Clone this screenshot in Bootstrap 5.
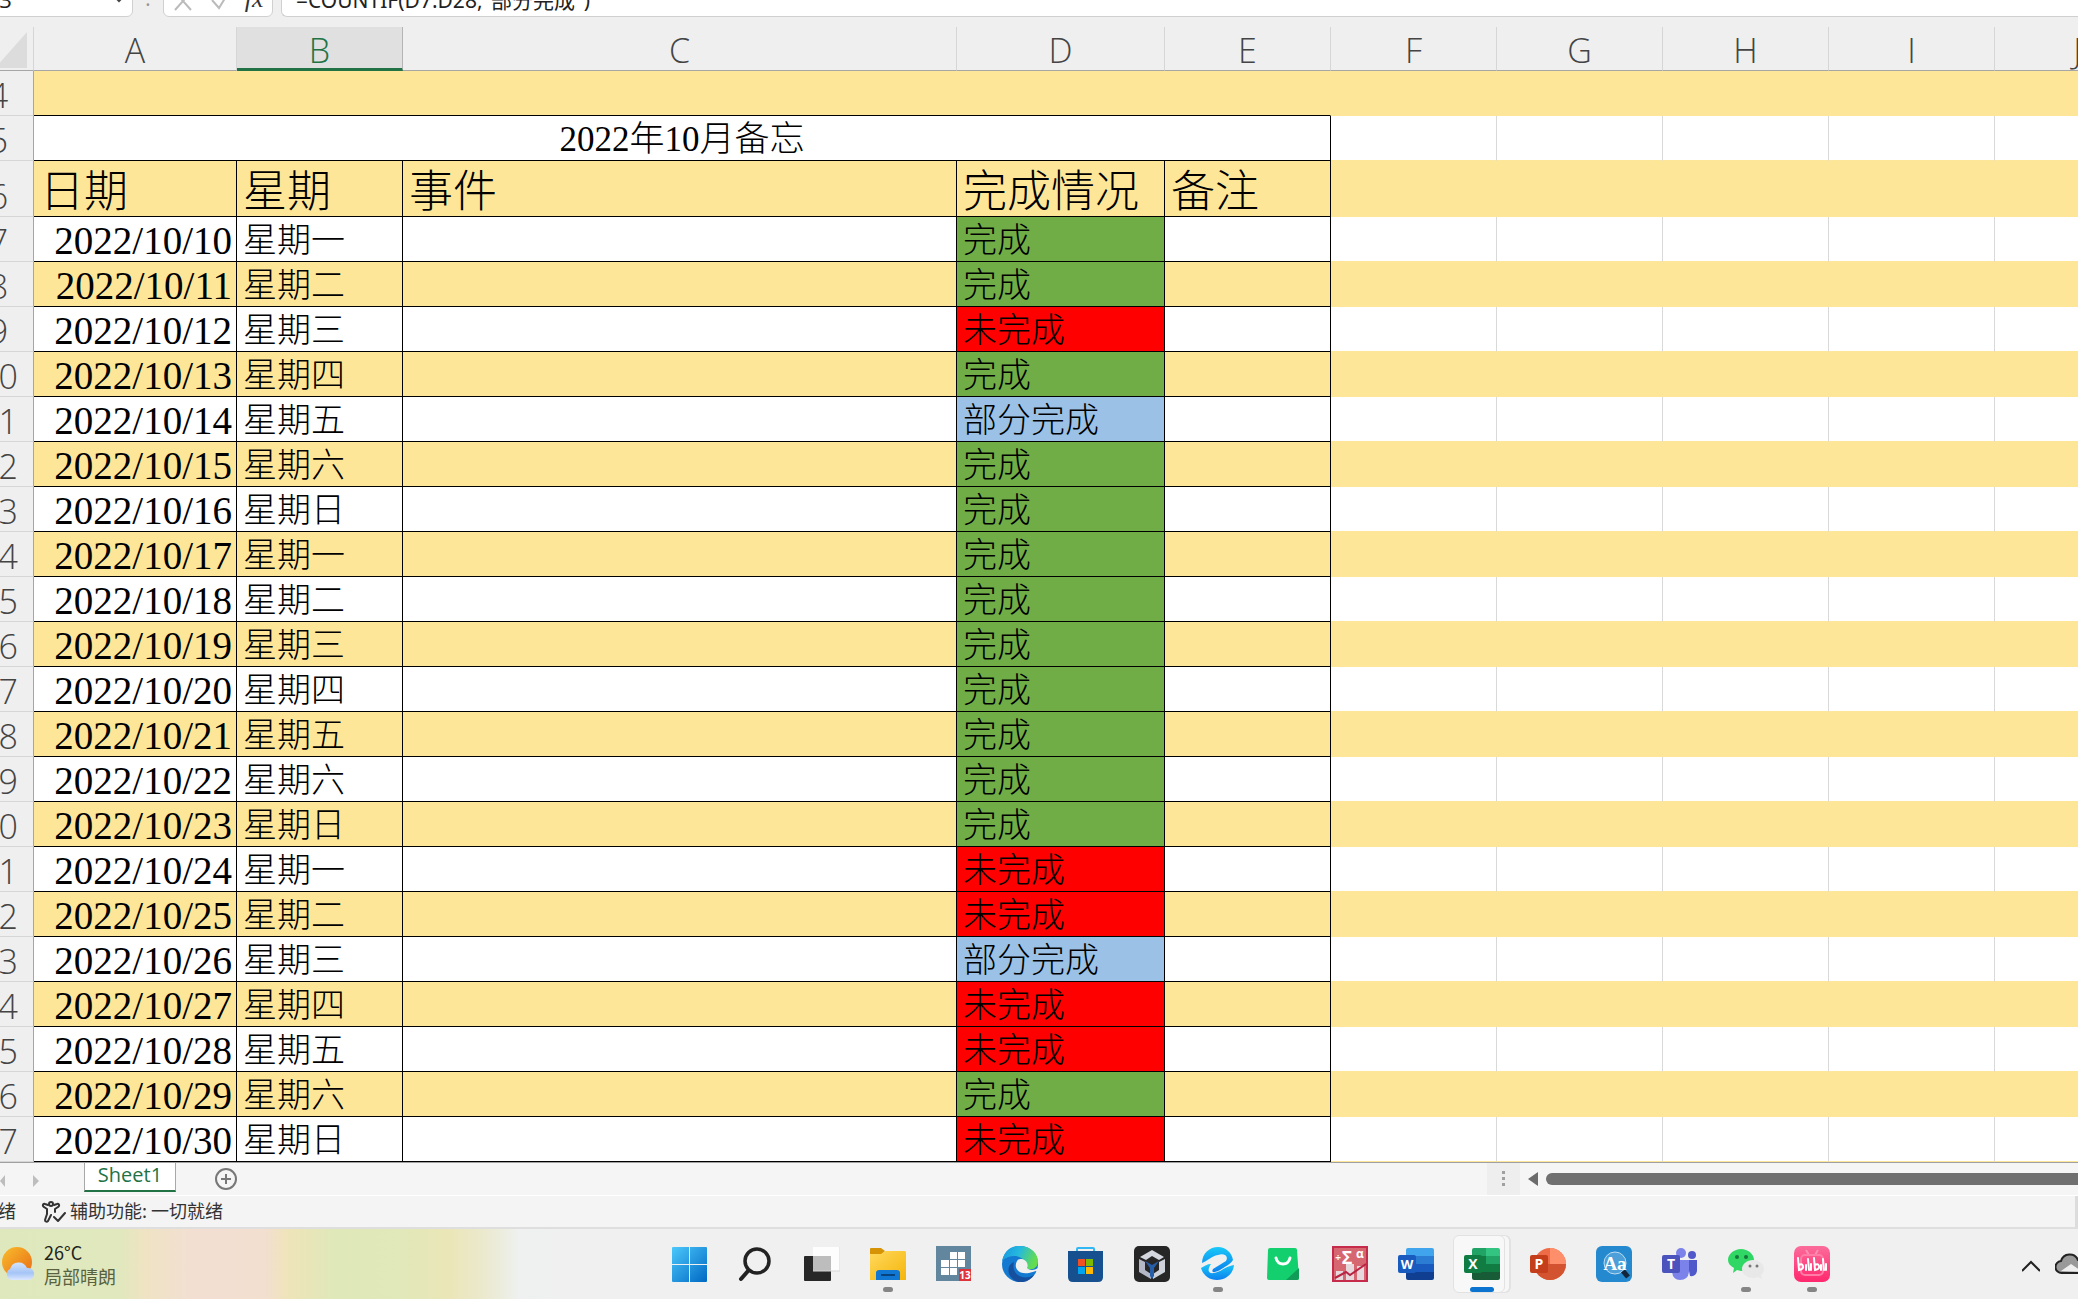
<!DOCTYPE html>
<html lang="zh-CN">
<head>
<meta charset="utf-8">
<meta name="viewport" content="width=device-width, initial-scale=1">
<title>2022年10月备忘 - Excel</title>
<link href="https://cdn.jsdelivr.net/npm/bootstrap@5.3.0/dist/css/bootstrap.min.css" rel="stylesheet">
<style>
  body { background: #efefef; color: #222; font-family: "Open Sans", "Noto Sans CJK SC", sans-serif; overflow: hidden; }
  /* formula bar */
  .formula-bar { margin-top: -19px; height: 36px; font-size: 22px; }
  .fx-box { background: #fff; border: 1px solid #d0d0d0; border-radius: 6px; height: 36px; }
  .name-box { width: 169px; margin-left: -36px; font-size: 22px; line-height: 34px; padding: 0 14px 0 20px; appearance: none;
    background: #fff; color: #222; }
  .name-wrap { position: relative; }
  .name-wrap svg { position: absolute; right: 8px; top: 12px; }
  .dots { width: 30px; text-align: center; color: #999; }
  .fx-tools { width: 110px; }
  .fx-tools button, .plain { background: none; border: 0; padding: 0; line-height: 1; }
  .fx-name { font: italic 26px "Liberation Serif", serif; color: #333; }
  .fx-input { font-family: "Noto Sans", "Noto Sans CJK SC", sans-serif; font-size: 21px; color: #222; padding: 0 14px; }
  /* sheet */
  .sheet { margin-top: 10px; margin-left: -36px; overflow: hidden; border-bottom: 1px solid #a0a0a0; }
  .grid { table-layout: fixed; width: 2197px; border-collapse: separate; border-spacing: 0; }
  .grid th, .grid td { height: 45px; padding: 4px 6px 0; border-right: 1px solid #d9d9d9; border-bottom: 1px solid #fee699;
    background: #fff; white-space: nowrap; line-height: 40px; vertical-align: middle; color: #000;
    font-family: "Liberation Serif", "Noto Sans CJK SC", serif; font-size: 34px; font-weight: 300; }
  .grid thead th { height: 44px; background: #efefef; border-bottom: 1px solid #a6a6a6; text-align: center;
    padding-top: 3px; font-family: "Open Sans", sans-serif; color: #444; border-right-color: #d6d6d6; }
  .grid thead th.picked { background: #e0e0e0; color: #217346; border-bottom: 3px solid #217346; border-right-color: #b4b4b4; padding-top: 5px; line-height: 36px; }
  .grid tbody th { background: #efefef; text-align: center; border-right-color: #a6a6a6; border-bottom-color: #d6d6d6;
    font-family: "Open Sans", sans-serif; color: #444; }
  .grid tr.band td { background: #fee699; border-color: #fee699; }
  .grid tr.titles td { height: 56px; font-size: 44px; padding-top: 8px; }
  .grid tr.titles th { height: 56px; vertical-align: bottom; }
  .grid td.edge, .grid tr.band td.edge { border-color: #000; }
  .grid tr.lead-row td { border-bottom-color: #000; }
  .grid td.caption-cell { font-size: 35px; }
  .grid td.day { font-size: 39px; text-align: right; padding-right: 4px; }
  .grid td.done, .grid tr.band td.done { background: #70ad47; }
  .grid td.undone, .grid tr.band td.undone { background: #f00; }
  .grid td.partly, .grid tr.band td.partly { background: #9bc2e6; }
  .all-corner { display: block; margin-left: auto; }
  /* tabs and status */
  .tab-strip { height: 33px; background: #f5f5f5; border-bottom: 1px solid #fff; }
  .tab-arrows { width: 84px; }
  .sheet-link { width: 92px; height: 29px; background: #fff; border: 1px solid #a8a8a8; border-top: 0; border-bottom: 2px solid #217346;
    color: #217346; font-size: 20px; line-height: 24px; text-align: center; text-decoration: none; }
  .add-sheet { margin-left: 38px; }
  .scroll-area { width: 591px; }
  .splitter { width: 33px; background: #eee; }
  .thumb { height: 12px; background: #707070; border-radius: 6px 0 0 6px; }
  .status { height: 33px; background: #f4f4f4; border-bottom: 2px solid #dedede; font: 18px/28px "Noto Sans CJK SC", sans-serif; color: #333; }
  .status-ready { margin-left: -20px; }
  .status-end { width: 3px; background: #dcdcdc; }
  /* taskbar */
  .taskbar { height: 70px; background: #f0f0f0; }
  .weather { width: 657px; font: 18px "Noto Sans CJK SC", sans-serif;
    background: linear-gradient(90deg, #dfe8bd 0, #e1e8bd 120px, #efe3c3 145px, #f2dfd2 190px, #f2dfd0 265px, #efe4b9 288px, #dfe8b9 335px, #e1e8b9 400px, #ebe6b8 450px, #ebe9cf 485px, #eef1f0 520px, #f0f0f0 560px); }
  .weather-text { line-height: 24px; color: #59623f; }
  .weather-text b { color: #20241a; font-weight: 400; }
  .app { width: 66px; height: 58px; position: relative; }
  .app svg { display: block; margin: 0 auto; }
  .app.running::after { content: ""; position: absolute; left: 28px; bottom: 1px; width: 10px; height: 5px; border-radius: 3px; background: #858585; }
  .app.current::before { content: ""; position: absolute; left: 4px; top: 0; width: 52px; height: 58px; border: 1px solid #e2e2e2; border-radius: 6px; background: #f8f8f8; box-shadow: 5px 0 0 -1px #f7f7f7, 6px 0 0 0 #e2e2e2; }
  .app.current svg { position: relative; }
  .app.current::after { left: 21px; width: 24px; background: #0a74d0; }
  .tray { gap: 15px; margin-right: -9px; }
  svg text { font-family: "Open Sans", sans-serif; font-weight: 700; fill: #fff; text-anchor: middle; }
</style>
<script src="https://cdn.jsdelivr.net/npm/bootstrap@5.3.0/dist/js/bootstrap.bundle.min.js"></script>
</head>
<body>
<header class="formula-bar d-flex">
  <div class="name-wrap">
    <input class="fx-box name-box" aria-label="名称框" value="B3">
    <svg width="12" height="10" viewBox="0 0 12 10"><path d="M1 3l5 5 5-5" fill="none" stroke="#444" stroke-width="2"/></svg>
  </div>
  <div class="dots">:</div>
  <div class="fx-box fx-tools d-flex align-items-center justify-content-around">
    <button aria-label="取消"><svg width="20" height="20" viewBox="0 0 20 20"><path d="M2 1l16 18M18 1L2 19" stroke="#bbb" stroke-width="2"/></svg></button>
    <button aria-label="输入"><svg width="18" height="16" viewBox="0 0 18 16"><path d="M2 6l7 8 8-13" fill="none" stroke="#bbb" stroke-width="2"/></svg></button>
    <button class="fx-name" aria-label="插入函数">fx</button>
  </div>
  <input class="fx-box fx-input flex-grow-1 ms-2 border-end-0 rounded-end-0" aria-label="编辑栏" value='=COUNTIF(D7:D28,"部分完成")'>
</header>

<main class="sheet">
  <table class="grid">
    <colgroup><col style="width:70px"><col style="width:203px"><col style="width:166px"><col style="width:554px"><col style="width:208px"><col style="width:166px"><col style="width:166px"><col style="width:166px"><col style="width:166px"><col style="width:166px"><col style="width:166px"></colgroup>
    <thead>
      <tr>
        <th aria-label="全选"><svg class="all-corner" width="32" height="36" viewBox="0 0 32 36"><path d="M32 0v36H0z" fill="#dcdcdc"/></svg></th>
        <th>A</th><th class="picked">B</th><th>C</th><th>D</th><th>E</th><th>F</th><th>G</th><th>H</th><th>I</th><th>J</th>
      </tr>
    </thead>
    <tbody id="rows">
      <tr class="band lead-row"><th>4</th><td colspan="5"></td><td class="border-bottom-0"></td><td class="border-bottom-0"></td><td class="border-bottom-0"></td><td class="border-bottom-0"></td><td class="border-bottom-0"></td></tr>
      <tr><th>5</th><td colspan="5" class="edge caption-cell text-center">2022年10月备忘</td><td></td><td></td><td></td><td></td><td></td></tr>
      <tr class="band titles"><th>6</th><td class="edge">日期</td><td class="edge">星期</td><td class="edge">事件</td><td class="edge">完成情况</td><td class="edge">备注</td><td></td><td></td><td></td><td></td><td></td></tr>
    </tbody>
  </table>
</main>

<nav class="tab-strip d-flex">
  <div class="tab-arrows d-flex align-items-center">
    <button class="plain" aria-label="上一张"><svg width="5" height="12" viewBox="0 0 5 12"><path d="M5 0v12L0 6z" fill="#bdbdbd"/></svg></button>
    <button class="plain ms-4 ps-1" aria-label="下一张"><svg width="6" height="12" viewBox="0 0 6 12"><path d="M0 0v12l6-6z" fill="#bdbdbd"/></svg></button>
  </div>
  <a class="sheet-link" href="#rows">Sheet1</a>
  <button class="plain add-sheet" aria-label="新工作表"><svg width="24" height="24" viewBox="0 0 24 24" fill="none" stroke="#777"><circle cx="12" cy="12" r="10" stroke-width="2"/><path d="M12 7v10M7 12h10" stroke-width="2"/></svg></button>
  <div class="scroll-area d-flex ms-auto align-items-center">
    <div class="splitter h-100 d-flex align-items-center justify-content-center"><svg width="4" height="16" viewBox="0 0 4 16" fill="#a0a0a0"><path d="M0 0h3v3H0zM0 6h3v3H0zM0 12h3v3H0z"/></svg></div>
    <svg width="10" height="14" viewBox="0 0 10 14" class="mx-2"><path d="M10 0v14L0 7z" fill="#6b6b6b"/></svg>
    <div class="thumb flex-grow-1"></div>
  </div>
</nav>

<footer>
  <div class="status d-flex">
    <span class="status-ready">就绪</span>
    <svg class="align-self-center ms-4 me-1" width="26" height="22" viewBox="0 0 26 22" fill="none" stroke="#333" stroke-width="2" stroke-linecap="round" stroke-linejoin="round"><circle cx="11" cy="3" r="2"/><path d="M8 4L5 3C3 2 2 5 4 6l3 2v5l-2 6c0 2 2 2 3 1l3-6M14 4l3-1c2-1 3 2 1 3l-3 2v3M14 16l4 4 7-8"/></svg>
    <span>辅助功能: 一切就绪</span>
    <span class="status-end ms-auto"></span>
  </div>
  <div class="taskbar d-flex align-items-center">
    <div class="weather h-100 d-flex align-items-center">
      <svg width="36" height="36" viewBox="0 0 36 36">
        <defs><linearGradient id="sun" x2="1" y2="1"><stop stop-color="#f8bd2b"/><stop offset="1" stop-color="#e96b18"/></linearGradient><linearGradient id="cloud" x2="0" y2="1"><stop stop-color="#d3e5ff"/><stop offset=".6" stop-color="#a5c4f6"/><stop offset="1" stop-color="#dbe7ff"/></linearGradient></defs>
        <circle cx="17" cy="16" r="15" fill="url(#sun)"/><path d="M11 34a6 6 0 0 1-1-11 9 9 0 0 1 17-1 6 6 0 0 1 2 12z" fill="url(#cloud)"/>
      </svg>
      <div class="weather-text ps-2 ms-0"><b>26°C</b><br>局部晴朗</div>
    </div>
    <button class="plain app" aria-label="开始"><svg width="36" height="36" viewBox="0 0 36 36"><defs><linearGradient id="win" x2="1" y2="1"><stop stop-color="#4cc8fb"/><stop offset="1" stop-color="#0068c4"/></linearGradient></defs><path d="M0 2a1 1 0 0 1 1-1h16v17H0zM18 1h16a1 1 0 0 1 1 1v16H18zM0 19h17v17H1a1 1 0 0 1-1-1zM18 19h17v16a1 1 0 0 1-1 1H18z" fill="url(#win)"/></svg></button>
    <button class="plain app" aria-label="搜索"><svg width="36" height="36" viewBox="0 0 36 36" fill="none" stroke="#222" stroke-linecap="round"><circle cx="19" cy="15" r="12" stroke-width="3.500"/><path d="M10 25l-7 8" stroke-width="4"/></svg></button>
    <button class="plain app" aria-label="任务视图"><svg width="36" height="36" viewBox="0 0 36 36"><rect x="0" y="10" width="27" height="25" rx="1" fill="#272727"/><path d="M9 1h27v24H9z" fill="#fdfdfd"/><path d="M9 10h18v15H9z" fill="#bdbdbd"/><path d="M9 25h27V1" fill="none" stroke="#d5d5d5"/></svg></button>
    <button class="plain app running" aria-label="文件资源管理器"><svg width="36" height="36" viewBox="0 0 36 36"><defs><linearGradient id="fold" x2="1" y2="1"><stop stop-color="#ffd95e"/><stop offset="1" stop-color="#f5b50a"/></linearGradient></defs><path d="M0 3a1 1 0 0 1 1-1h10l4 3-4 5H0z" fill="#d69305"/><path d="M0 8h11l4-3h20l1 1v28H0z" fill="url(#fold)"/><path d="M6 34V27q0-3 3-3h18q3 0 3 3v7z" fill="#1078d3"/><path d="M11 29h14" stroke="#07447f" stroke-width="2"/></svg></button>
    <button class="plain app" aria-label="日历"><svg width="36" height="36" viewBox="0 0 36 36"><rect width="35" height="35" y="0" fill="#62869e"/><path d="M14 6h7v7h-7zM22 6h7v7h-7zM5 14h8v7H5zM14 14h7v7h-7zM22 14h7v7h-7zM5 22h8v7H5zM14 22h7v7h-7z" fill="#fff"/><path d="M23 23h12v12H23z" fill="#df333b"/><text x="29" y="33" font-size="10">13</text></svg></button>
    <button class="plain app" aria-label="Edge"><svg width="36" height="36" viewBox="0 0 36 36"><defs><linearGradient id="eg" x2="1" y2=".3"><stop stop-color="#1593df"/><stop offset=".5" stop-color="#25b9df"/><stop offset="1" stop-color="#63dc51"/></linearGradient></defs><circle cx="18" cy="18" r="18" fill="#1479d0"/><path d="M0 15C3 3 10 0 18 0c12 0 18 9 18 15 0 6-4 9-9 8-4 0-5-2-3-4C23 9 8 7 0 15z" fill="url(#eg)"/><path d="M12 16c-3 11 7 20 20 13-3 5-9 8-16 7C3 31 5 18 12 16z" fill="#164f9e"/><path d="M15 15c-4 7 2 14 12 12 4-1 6-2 7-2l2 2V22c-4 3-10 2-11 0 2-4-1-8-5-9-2 0-4 0-5 2z" fill="#f0f0f0"/></svg></button>
    <button class="plain app" aria-label="Microsoft Store"><svg width="36" height="36" viewBox="0 0 36 36"><path d="M9 6V3q0-1 1-1h15q1 0 1 1v3" fill="none" stroke="#31b7f4" stroke-width="2"/><path d="M0 5h35v26q0 5-5 5H5q-5 0-5-5z" fill="#17508f"/><path d="M10 13h7v7h-7z" fill="#f25022"/><path d="M18 13h7v7h-7z" fill="#7fba00"/><path d="M10 21h7v7h-7z" fill="#00a4ef"/><path d="M18 21h7v7h-7z" fill="#ffb900"/></svg></button>
    <button class="plain app" aria-label="3D 应用"><svg width="36" height="36" viewBox="0 0 36 36"><rect width="36" height="36" rx="5" fill="#262626"/><path d="M18 4l12 7-5 3-7-4-6 4-6-3z" fill="#d5d7df"/><path d="M5 13l6 3v8l6 4v5L5 26z" fill="#b4b7c5"/><path d="M31 13l-6 3v8l-6 4v5l12-7z" fill="#d0d2db"/><path d="M11 15l7 4 7-4-5 7v8l-2 3-2-3v-8z" fill="#275ea9"/></svg></button>
    <button class="plain app running" aria-label="浏览器"><svg width="36" height="36" viewBox="0 0 36 36"><defs><linearGradient id="br" x2="0" y2="1"><stop stop-color="#19c8f8"/><stop offset="1" stop-color="#0b80ee"/></linearGradient></defs><path d="M2 17C2 7 10 1 18 1s14 6 15 13c-3 5-9 7-13 10-6 3-9 3-7-1l13-8c3-5-2-8-8-6-7 1-10 6-16 8z" fill="url(#br)"/><path d="M1 22c4-2 6-4 10-4-4 6-3 10 3 9 7-1 12-7 20-8-1 9-8 15-17 15C9 34 3 29 1 22z" fill="url(#br)"/></svg></button>
    <button class="plain app" aria-label="应用商店"><svg width="36" height="36" viewBox="0 0 36 36"><path d="M4 2h25q2 0 2 2l2 28q0 2-2 2H3q-2 0-2-2L2 4q0-2 2-2z" fill="#13cf6d"/><path d="M33 22v10q0 2-2 2H20z" fill="#119d57"/><path d="M10 12c2 8 12 8 14 0" fill="none" stroke="#fff" stroke-width="3" stroke-linecap="round"/></svg></button>
    <button class="plain app" aria-label="公式编辑器"><svg width="36" height="36" viewBox="0 0 36 36"><rect width="36" height="36" fill="#c72b4c"/><path d="M2 2h32v32H2z" fill="#d66771"/><path d="M4 25h7v9H4zM14 18h8v16h-8zM25 20h7v14h-7z" fill="#e6d8dc"/><path d="M3 32l11-6 4 3 16-11" fill="none" stroke="#ba2444" stroke-width="2"/><text x="15" y="18" font-size="18">Σ</text><text x="28" y="12" font-size="12">α</text><text x="6" y="15" font-size="10">÷</text></svg></button>
    <button class="plain app" aria-label="Word"><svg width="36" height="36" viewBox="0 0 36 36"><path d="M8 4q0-2 2-2h24q2 0 2 2v6H8z" fill="#41a5ee"/><path d="M8 10h28v8H8z" fill="#2b7cd3"/><path d="M8 18h28v8H8z" fill="#185abd"/><path d="M8 26h28v6q0 2-2 2H10q-2 0-2-2z" fill="#103f91"/><rect y="9" width="18" height="18" rx="2" fill="#185abd"/><text x="9" y="23" font-size="13">W</text></svg></button>
    <button class="plain app running current" aria-label="Excel"><svg width="36" height="36" viewBox="0 0 36 36"><path d="M8 4q0-2 2-2h12v8H8z" fill="#21a366"/><path d="M22 2h12q2 0 2 2v6H22z" fill="#33c481"/><path d="M8 10h14v8H8z" fill="#107c41"/><path d="M22 10h14v8H22z" fill="#21a366"/><path d="M8 18h28v8H8z" fill="#107c41"/><path d="M8 26h28v6q0 2-2 2H10q-2 0-2-2z" fill="#185c37"/><rect y="9" width="18" height="18" rx="2" fill="#107c41"/><text x="9" y="23" font-size="14">X</text></svg></button>
    <button class="plain app" aria-label="PowerPoint"><svg width="36" height="36" viewBox="0 0 36 36"><circle cx="20" cy="18" r="16" fill="#ed6c47"/><path d="M20 2a16 16 0 0 1 16 16H20z" fill="#ff8f6b"/><path d="M4 18h32a16 16 0 0 1-32 0z" fill="#d35230"/><rect y="9" width="18" height="18" rx="2" fill="#c43e1c"/><text x="9" y="23" font-size="14">P</text></svg></button>
    <button class="plain app" aria-label="词典"><svg width="36" height="36" viewBox="0 0 36 36"><rect width="36" height="36" rx="6" fill="#2589d0"/><circle cx="19" cy="17" r="11" fill="#4c9fd8" stroke="#b9dcf2"/><path d="M27 25l5 6" stroke="#12253a" stroke-width="5"/><text x="19" y="24" font-size="19" style="font-family:'Liberation Serif',serif">Aa</text></svg></button>
    <button class="plain app" aria-label="Teams"><svg width="36" height="36" viewBox="0 0 36 36"><circle cx="30" cy="9" r="4" fill="#5059c9"/><path d="M25 14h10v11q-1 6-7 5z" fill="#5059c9"/><circle cx="19" cy="7" r="5" fill="#7b83eb"/><path d="M10 14h17v12q-1 8-9 8-7 0-8-8z" fill="#7b83eb"/><rect y="9" width="18" height="18" rx="2" fill="#4b53bc"/><text x="9" y="23" font-size="14">T</text></svg></button>
    <button class="plain app running" aria-label="微信"><svg width="36" height="36" viewBox="0 0 36 36"><path d="M13 3c7 0 13 5 13 11s-6 11-13 11l-4-1-4 3 1-5C2 20 0 17 0 14 0 8 6 3 13 3z" fill="#31d765"/><circle cx="9" cy="11" r="2" fill="#15783a"/><circle cx="18" cy="11" r="2" fill="#15783a"/><path d="M25 14c6 0 11 4 11 9 0 2-1 4-3 6l1 4-4-2c-8 3-16-2-16-8 0-5 5-9 11-9z" fill="#e8e8e8"/><circle cx="22" cy="20" r="1.500" fill="#777"/><circle cx="29" cy="20" r="1.500" fill="#777"/></svg></button>
    <button class="plain app running" aria-label="哔哩哔哩"><svg width="36" height="36" viewBox="0 0 36 36"><defs><linearGradient id="bili" x2="0" y2="1"><stop stop-color="#fb6c9b"/><stop offset="1" stop-color="#ff286e"/></linearGradient></defs><rect width="36" height="36" rx="7" fill="url(#bili)"/><path d="M12 4l3 5M24 4l-3 5" stroke="#ff8fb1" stroke-width="2"/><rect x="7" y="9" width="22" height="20" rx="4" fill="none" stroke="#ff7da6" stroke-width="2"/><g fill="none" stroke="#fff" stroke-width="2" stroke-linecap="round"><path d="M4 12l1 12q5-1 4-4t-4-1M12 19v5M14 13l1 11M17 18v6M20 12l1 12q5-1 4-4t-4-1M27 19v5M29 13l1 11M32 18v6"/></g></svg></button>
    <div class="tray d-flex align-items-center ms-auto">
      <button class="plain" aria-label="显示隐藏的图标"><svg width="18" height="12" viewBox="0 0 18 12"><path d="M0 11l9-9 9 9" fill="none" stroke="#222" stroke-width="2"/></svg></button>
      <svg width="32" height="22" viewBox="0 0 32 22"><path d="M7 20a6 6 0 0 1-1-12 9 9 0 0 1 17-1 6 6 0 0 1 2 13z" fill="#999" stroke="#222" stroke-width="2"/><path d="M6 18l10-7 12 8z" fill="#eee"/></svg>
    </div>
  </div>
</footer>

<script>
  // one letter per day from 10 October: d = done, u = undone, p = partly done
  const states = 'ddudpddddddddduupuudu';
  const looks = { d: ['done', '完成'], u: ['undone', '未完成'], p: ['partly', '部分完成'] };
  const weekdays = '一二三四五六日';
  document.getElementById('rows').insertAdjacentHTML('beforeend', [...states].map((s, i) =>
    `<tr class="${i % 2 ? 'band' : ''}"><th>${i + 7}</th><td class="edge day">2022/10/${i + 10}</td><td class="edge">星期${weekdays[i % 7]}</td>` +
    `<td class="edge"></td><td class="edge ${looks[s][0]}">${looks[s][1]}</td><td class="edge"></td>` + '<td></td>'.repeat(5) + '</tr>').join(''));
</script>
</body>
</html>
